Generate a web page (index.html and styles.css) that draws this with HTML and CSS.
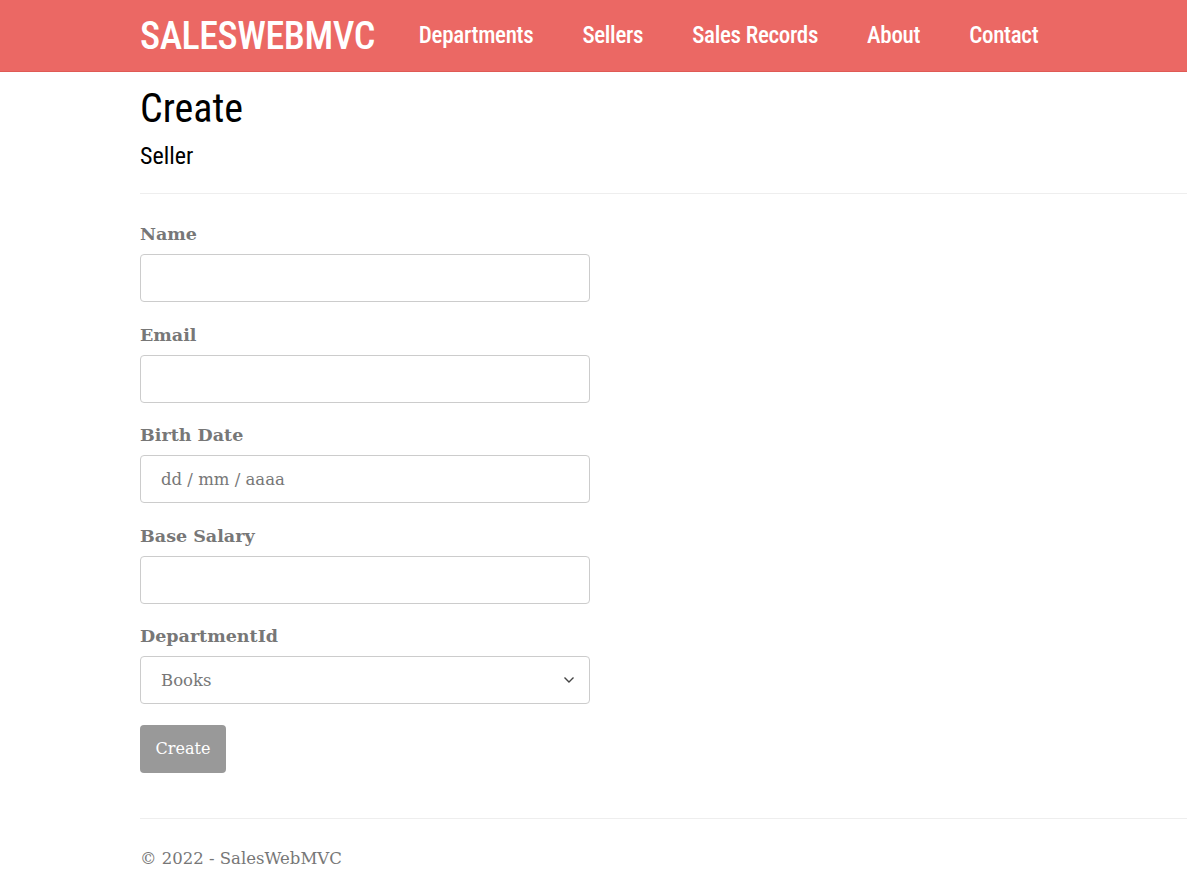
FILE: index.html
```html
<!DOCTYPE html>
<html lang="en">
<head>
<meta charset="utf-8">
<title>Create - SalesWebMVC</title>
<link rel="stylesheet" href="styles.css">
</head>
<body>
<header class="navbar">
  <div class="nav-inner">
    <a class="brand" href="#">SALESWEBMVC</a>
    <nav class="nav-links">
      <a href="#">Departments</a>
      <a href="#">Sellers</a>
      <a href="#">Sales Records</a>
      <a href="#">About</a>
      <a href="#">Contact</a>
    </nav>
  </div>
</header>
<main class="page">
  <h1 class="title">Create</h1>
  <h4 class="subtitle">Seller</h4>
  <hr class="rule">
  <form class="form">
    <div class="group">
      <label class="label">Name</label>
      <input class="control" type="text">
    </div>
    <div class="group">
      <label class="label">Email</label>
      <input class="control" type="text">
    </div>
    <div class="group">
      <label class="label">Birth Date</label>
      <div class="control placeholder">dd / mm / aaaa</div>
    </div>
    <div class="group">
      <label class="label">Base Salary</label>
      <input class="control" type="text">
    </div>
    <div class="group">
      <label class="label">DepartmentId</label>
      <div class="control select"><span>Books</span>
        <svg class="chev" width="12" height="8" viewBox="0 0 12 8"><path d="M1.5 1.5 L6 6 L10.5 1.5" fill="none" stroke="#444" stroke-width="1.4"/></svg>
      </div>
    </div>
    <button class="btn" type="button">Create</button>
  </form>
</main>
<footer class="footer">
  <div class="footer-text">© 2022 - SalesWebMVC</div>
</footer>
</body>
</html>
```
FILE: styles.css
```css
* { box-sizing: border-box; }
html, body { margin: 0; padding: 0; background: #fff; }
body { font-family: "DejaVu Serif", Georgia, serif; color: #777; }
.navbar { background: #eb6864; border-bottom: 1px solid #e05a55; height: 72px; }
.nav-inner { display: flex; align-items: center; height: 71px; padding-left: 140px; }
.brand, .nav-links a, .title, .subtitle {
  font-family: "Roboto Condensed", "Open Sans", "Liberation Sans", sans-serif;
}
.brand { color: #fff; text-decoration: none; font-size: 38px; font-weight: 500; letter-spacing: -0.45px; margin-right: 44px; line-height: 40px; }
.nav-links { display: flex; gap: 49px; }
.nav-links a { color: #fff; text-decoration: none; font-size: 23px; font-weight: 500; letter-spacing: -0.3px; line-height: 30px; }
.page { padding-left: 140px; }
.title { margin: 0; padding-top: 14px; font-size: 40px; font-weight: 400; color: #000; line-height: 46px; }
.subtitle { margin: 9px 0 0; font-size: 24px; font-weight: 400; color: #000; line-height: 30px; }
.rule { margin: 22px 0 0; border: 0; border-top: 1px solid #eee; }
.form { padding-top: 28px; width: 450px; }
.group { margin-bottom: 20.5px; }
.label { display: block; font-weight: 700; font-size: 17.5px; color: #777; line-height: 24px; margin-bottom: 8px; }
.control { display: flex; align-items: center; width: 450px; height: 48px; border: 1px solid #ccc; border-radius: 4px; padding: 0 20px; font-family: inherit; font-size: 16.5px; color: #777; background: #fff; }
.select { justify-content: space-between; }
.chev { margin-right: -6px; }
.btn { display: block; width: 86px; height: 48px; background: #999; color: #fff; border: 0; border-radius: 4px; font-family: inherit; font-size: 16px; padding: 0; }
.footer { margin-top: 45px; margin-left: 140px; border-top: 1px solid #eee; padding-top: 28px; }
.footer-text { font-size: 16.5px; line-height: 24px; color: #777; }
```
